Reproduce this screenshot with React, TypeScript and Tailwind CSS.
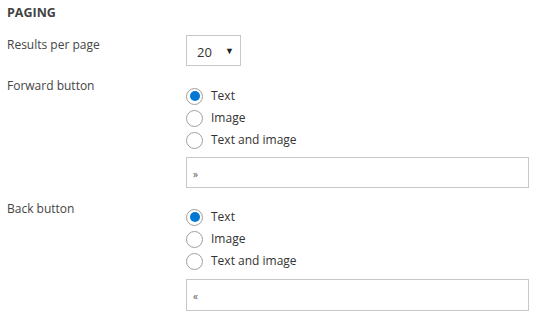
import { useState } from 'react';

type Choice = 'text' | 'image' | 'both';

const options: { value: Choice; label: string }[] = [
  { value: 'text', label: 'Text' },
  { value: 'image', label: 'Image' },
  { value: 'both', label: 'Text and image' },
];

function RadioGroup({ value, onChange }: { value: Choice; onChange: (v: Choice) => void }) {
  return (
    <div className="flex flex-col">
      {options.map((o) => (
        <label key={o.value} className="flex h-[22px] cursor-pointer items-center">
          <span className="flex h-[17px] w-[17px] items-center justify-center rounded-full border border-[#a19f9d] bg-white">
            {value === o.value && <span className="h-[10px] w-[10px] rounded-full bg-[#0078d4]" />}
          </span>
          <input
            type="radio"
            className="hidden"
            checked={value === o.value}
            onChange={() => onChange(o.value)}
          />
          <span className="ml-[8px] text-[#333]">{o.label}</span>
        </label>
      ))}
    </div>
  );
}

export default function App() {
  const [forward, setForward] = useState<Choice>('text');
  const [back, setBack] = useState<Choice>('text');

  return (
    <div className="min-h-screen bg-white pl-[7px] pt-[5px] font-['Segoe_UI','Open_Sans',sans-serif] text-[12px] leading-[18px] text-[#444]">
      <h2 className="text-[12.5px] font-bold leading-[16px] text-[#444]">PAGING</h2>

      <div className="mt-[14px] flex">
        <div className="w-[179px] pt-[1px]">Results per page</div>
        <div className="flex h-[31px] w-[55px] items-center border border-[#c8c8c8] pl-[10px] pr-[6px]">
          <span className="pt-[3px] text-[13px] text-[#333]">20</span>
          <span className="ml-auto text-[9px] text-[#222]">▼</span>
        </div>
      </div>

      <div className="mt-[9px] flex">
        <div className="w-[179px] pt-[2px]">Forward button</div>
        <div className="pt-[10px]">
          <RadioGroup value={forward} onChange={setForward} />
          <div className="mt-[6px] flex h-[31px] w-[343px] items-center border border-[#c8c8c8] pl-[6px] pt-[2px] text-[10px] text-[#555]">
            »
          </div>
        </div>
      </div>

      <div className="mt-[10px] flex">
        <div className="w-[179px] pt-[2px]">Back button</div>
        <div className="pt-[8px]">
          <RadioGroup value={back} onChange={setBack} />
          <div className="mt-[7px] flex h-[32px] w-[343px] items-center border border-[#c8c8c8] pl-[6px] pt-[2px] text-[10px] text-[#555]">
            «
          </div>
        </div>
      </div>
    </div>
  );
}
